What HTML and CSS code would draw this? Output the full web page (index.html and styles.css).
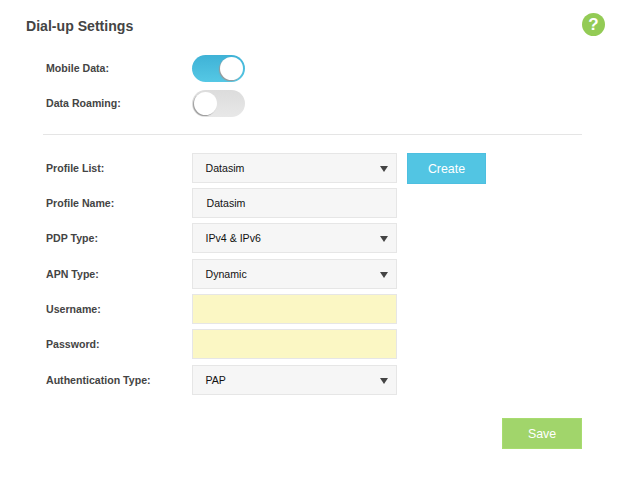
FILE: index.html
```html
<!doctype html>
<html lang="en">
  <head>
    <meta charset="UTF-8" />
    <title>Dial-up Settings</title>
    <link rel="stylesheet" href="styles.css">
  </head>
  <body>
    <div class="panel">
      <div class="panel-head">
        <h1>Dial-up Settings</h1>
        <span class="help-icon">?</span>
      </div>

      <div class="switch-rows">
        <div class="row">
          <label>Mobile Data:</label>
          <span class="switch switch-on"><span class="knob"></span></span>
        </div>
        <div class="row">
          <label>Data Roaming:</label>
          <span class="switch"><span class="knob"></span></span>
        </div>
      </div>

      <hr class="divider">

      <div class="form-rows">
        <div class="row">
          <label>Profile List:</label>
          <div class="field select">Datasim<span class="arrow"></span></div>
          <button class="btn btn-create">Create</button>
        </div>
        <div class="row">
          <label>Profile Name:</label>
          <div class="field text">Datasim</div>
        </div>
        <div class="row">
          <label>PDP Type:</label>
          <div class="field select">IPv4 &amp; IPv6<span class="arrow"></span></div>
        </div>
        <div class="row">
          <label>APN Type:</label>
          <div class="field select">Dynamic<span class="arrow"></span></div>
        </div>
        <div class="row">
          <label>Username:</label>
          <div class="field blank"></div>
        </div>
        <div class="row">
          <label>Password:</label>
          <div class="field blank"></div>
        </div>
        <div class="row">
          <label>Authentication Type:</label>
          <div class="field select">PAP<span class="arrow"></span></div>
        </div>
      </div>

      <div class="actions">
        <button class="btn btn-save">Save</button>
      </div>
    </div>
  </body>
</html>
```

FILE: styles.css
```css
:root {
  --color-text: #444;
  --color-blue: #52c5e3;
  --color-green: #a1d56b;
  --color-border: #e6e6e6;
  --font-sans: "Liberation Sans", Arial, sans-serif;
}

body {
  margin: 0;
  background: #fff;
  color: var(--color-text);
  font-family: var(--font-sans);
  font-size: 10.6px;
}

.panel {
  padding: 13px 42px 0 26px;
}

.panel-head {
  display: flex;
  justify-content: space-between;
  align-items: flex-start;
  height: 40px;
}

h1 {
  margin: 4px 0 0;
  font-size: 14.1px;
  line-height: 18px;
  font-weight: bold;
}

.help-icon {
  width: 23px;
  height: 23px;
  margin-right: -23px;
  border-radius: 50%;
  background: #93cb55;
  color: #fff;
  font-size: 17px;
  font-weight: bold;
  line-height: 23px;
  text-align: center;
}

.row {
  display: flex;
  align-items: center;
  height: 30px;
}

.row label {
  width: 146px;
  margin-left: 20px;
  font-weight: bold;
  flex-shrink: 0;
}

.switch-rows {
  display: flex;
  flex-direction: column;
  gap: 5px;
}

.switch {
  position: relative;
  display: block;
  width: 53px;
  height: 27px;
  border-radius: 14px;
  background: linear-gradient(#dcdcdc, #e8e8e8);
}

.switch-on {
  background: linear-gradient(#3fb2d6, #55c8e5);
}

.knob {
  position: absolute;
  top: 2px;
  left: 2px;
  width: 23px;
  height: 23px;
  border-radius: 50%;
  background: #fff;
  box-shadow: -1px 1px 1px #999;
}

.switch-on .knob {
  left: 28px;
}

.divider {
  height: 1px;
  margin: 16px 0 17.6px 17px;
  border: 0;
  background: #e5e5e5;
}

.form-rows {
  display: flex;
  flex-direction: column;
  gap: 5.33px;
}

.field {
  position: relative;
  box-sizing: border-box;
  width: 205px;
  height: 30px;
  border: 1px solid var(--color-border);
  background: #f6f6f6;
  color: #111;
  line-height: 28px;
  padding-left: 12.5px;
}

.field.text {
  padding-left: 13.5px;
}

.field.blank {
  background: #fbf7c4;
}

.arrow {
  position: absolute;
  top: 12px;
  right: 8.5px;
  border-top: 6px solid #444;
  border-left: 4.5px solid transparent;
  border-right: 4.5px solid transparent;
}

.btn {
  box-sizing: border-box;
  border: 1px solid;
  color: #fff;
  font-family: var(--font-sans);
  font-size: 12.4px;
  padding: 1px 0 0;
}

.btn-create {
  width: 79px;
  height: 31px;
  margin: 1px 0 0 10px;
  background: var(--color-blue);
  border-color: #4dbfe0;
}

.actions {
  display: flex;
  justify-content: flex-end;
  margin-top: 23.4px;
}

.btn-save {
  width: 80px;
  height: 31px;
  background: var(--color-green);
  border-color: #a8dc70;
}
```
